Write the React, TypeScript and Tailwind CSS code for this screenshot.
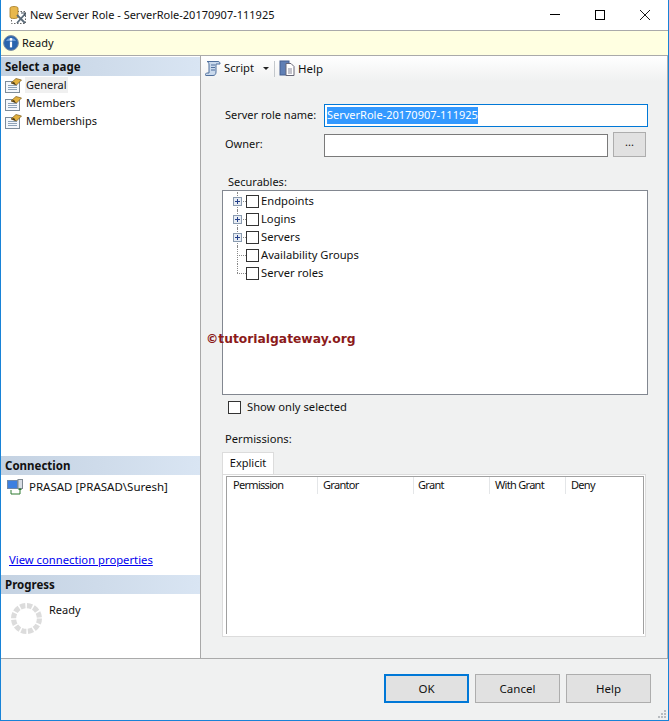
const font = { fontFamily: '"Noto Sans", sans-serif' };

// Server role page icon
function PageIcon() {
  return (
    <svg width="17" height="16" viewBox="0 0 17 16" className="shrink-0">
      <rect x="0.5" y="4.5" width="14" height="11" fill="#f4f7fb" stroke="#7d8b99" />
      <path d="M3 8.5h9M3 10.5h9M3 12.5h9" stroke="#8fa3b8" />
      <path d="M6 6l5-4.5 5.5 1.5-5 5z" fill="#e3b13f" stroke="#7a5a1a" strokeWidth="0.7" />
      <path d="M6 6l3-1 2 3z" fill="#4a3a18" />
    </svg>
  );
}

function SectionHeader({ children }: { children: React.ReactNode }) {
  return (
    <div className="flex h-[19px] shrink-0 items-center bg-gradient-to-r from-[#c4d2e2] to-[#d9e5f3] pl-1 text-[11.5px] font-bold text-[#111]">
      {children}
    </div>
  );
}

function Checkbox() {
  return <span className="block h-[13px] w-[13px] shrink-0 border border-[#333] bg-white" />;
}

function TreeRow({ label, expand, last }: { label: string; expand?: boolean; last?: boolean }) {
  return (
    <div className="relative flex h-[18px] items-center pl-[23px]">
      <span className={`absolute left-[14px] top-0 w-0 border-l border-dotted border-[#888] ${last ? "h-[9px]" : "h-[18px]"}`} />
      <span className="absolute left-[14px] top-[9px] w-[9px] border-t border-dotted border-[#888]" />
      {expand && (
        <svg width="9" height="9" viewBox="0 0 9 9" className="absolute left-[10px] top-[5px]">
          <rect x="0.5" y="0.5" width="8" height="8" fill="#e8edf4" stroke="#8a9bb0" />
          <path d="M2 4.5h5M4.5 2v5" stroke="#24408a" />
        </svg>
      )}
      <Checkbox />
      <span className="ml-[2px] text-[11.2px] text-[#111]">{label}</span>
    </div>
  );
}

function Column({ label, width }: { label: string; width: string }) {
  return (
    <div className={`flex h-[17px] items-center border-r border-[#e4e6e8] tracking-[-0.7px] text-[#111] ${width}`}>
      {label}
    </div>
  );
}

function FooterButton({ label, active }: { label: string; active?: boolean }) {
  return (
    <button
      type="button"
      className={`h-[29px] w-[85px] bg-[#e1e1e1] text-[11.5px] text-[#111] ${active ? "border-2 border-[#0078d7]" : "border border-[#adadad]"}`}
    >
      {label}
    </button>
  );
}

export default function App() {
  return (
    <div style={font} className="relative flex h-[721px] w-[669px] flex-col overflow-hidden border-x border-b border-[#1883d7] bg-white text-[11px] text-[#111]">
      {/* Title bar */}
      <div className="flex h-[31px] shrink-0 items-center border-b border-[#aaa] bg-white">
        <svg width="18" height="20" viewBox="0 0 18 20" className="ml-[8px] shrink-0">
          <rect x="2.5" y="6.5" width="14" height="12" fill="none" stroke="#666" strokeDasharray="1.5 1.5" />
          <path d="M1 3c0-2 8-2 8 0v9c0 2-8 2-8 0z" fill="#e8b84e" stroke="#a57a25" strokeWidth="0.8" />
          <path d="M8 10l8 8M16 9l-8 9" stroke="#5a6a78" strokeWidth="1.8" />
          <path d="M12 8h4v3" fill="none" stroke="#3c4a58" strokeWidth="1.2" />
        </svg>
        <span className="ml-[3px] text-[#111]">New Server Role - ServerRole-20170907-111925</span>
        <div className="ml-auto mr-[18px] flex items-center gap-[35px]">
          <svg width="10" height="10" viewBox="0 0 10 10">
            <path d="M0 4.5h10" stroke="#000" />
          </svg>
          <svg width="10" height="10" viewBox="0 0 10 10">
            <rect x="0.5" y="0.5" width="9" height="9" fill="none" stroke="#000" />
          </svg>
          <svg width="10" height="10" viewBox="0 0 10 10">
            <path d="M0 0l10 10M10 0L0 10" stroke="#000" strokeWidth="0.9" />
          </svg>
        </div>
      </div>

      {/* Status bar */}
      <div className="flex h-[25px] shrink-0 items-center border-b border-[#aaa] bg-[#ffffe1] pl-[2px]">
        <svg width="16" height="16" viewBox="0 0 16 16" className="shrink-0">
          <circle cx="8" cy="8" r="7.4" fill="#2a64ad" stroke="#7f8fa3" />
          <path d="M3 6a5.5 5 0 0 1 10 0z" fill="#6d9bd6" />
          <circle cx="8" cy="4.4" r="1.3" fill="#fff" />
          <rect x="6.9" y="6.6" width="2.2" height="5.8" fill="#fff" />
        </svg>
        <span className="ml-[3px]">Ready</span>
      </div>

      <div className="flex min-h-0 flex-1">
        {/* Left panel */}
        <div className="flex w-[200px] shrink-0 flex-col border-r border-[#a8a8a8] bg-white pt-[1px]">
          <SectionHeader>Select a page</SectionHeader>
          <div className="flex flex-col pl-1">
            {["General", "Members", "Memberships"].map((page) => (
              <div key={page} className="flex h-[18px] items-center gap-[3px]">
                <PageIcon />
                <span className={page === "General" ? "bg-[#f0f0f0] px-[1px]" : "px-[1px]"}>{page}</span>
              </div>
            ))}
          </div>
          <div className="flex-1" />
          <SectionHeader>Connection</SectionHeader>
          <div className="flex h-[100px] shrink-0 flex-col pl-[6px] pt-[3px]">
            <div className="flex h-[18px] items-center gap-[7px]">
              <svg width="16" height="16" viewBox="0 0 16 16" className="shrink-0">
                <rect x="0.5" y="1.5" width="10" height="8" fill="#3d7fe0" stroke="#7088a8" />
                <rect x="11" y="0.5" width="4.5" height="9" fill="#d8dde4" stroke="#7d8790" />
                <path d="M4 11v4h9v-4" fill="none" stroke="#2f7a30" />
                <path d="M11 11l2-2 2 2z" fill="#2f7a30" />
              </svg>
              <span className="-ml-[1px] text-[11.5px]">PRASAD [PRASAD\Suresh]</span>
            </div>
            <a href="#" className="mt-auto mb-[6px] ml-[2px] text-[11.25px] text-[#0000ee] underline">
              View connection properties
            </a>
          </div>
          <SectionHeader>Progress</SectionHeader>
          <div className="flex h-[64px] shrink-0 items-start pl-[10px] pt-[8px]">
            <svg width="31" height="31" viewBox="1 1 30 30" className="mt-[1px] shrink-0">
              <circle cx="16" cy="16" r="12.5" fill="none" stroke="#dcdcdc" strokeWidth="5" strokeDasharray="5 1.55" />
            </svg>
            <span className="ml-[7px] leading-[16px]">Ready</span>
          </div>
        </div>

        {/* Right panel */}
        <div className="flex min-w-0 flex-1 flex-col border-r border-[#b0b0b0] bg-[#f0f1f1]">
          <div className="flex h-[25px] shrink-0 items-center bg-gradient-to-b from-white to-[#f0f1f1] pl-[4px]">
            <svg width="17" height="17" viewBox="0 0 17 17" className="shrink-0">
              <path d="M2 1.5h11c1.5 0 2 1 2 2.5h-4v8c0 2-1 3.5-3 3.5H1c-1 0-.5-2 .5-2.5H4V5C4 3 3.5 2 2 1.5z" fill="#c9d9ec" stroke="#4f6f9c" />
              <path d="M6 5h4M6 7.5h4M6 10h4" stroke="#4f6f9c" />
            </svg>
            <span className="ml-[2px] text-[11.2px]">Script</span>
            <span className="ml-[9px] h-0 w-0 border-x-[3px] border-t-[3px] border-x-transparent border-t-[#222]" />
            <span className="ml-[5px] h-[16px] border-l border-[#c4c8cc]" />
            <svg width="17" height="17" viewBox="0 0 17 17" className="ml-[4px] shrink-0">
              <rect x="1" y="1" width="9" height="14" fill="#5f7fb5" stroke="#445f90" />
              <path d="M7 3.5h5l3 3v9H7z" fill="#fff" stroke="#667" />
              <path d="M9 9h4M9 11h4M9 13h4" stroke="#889" />
            </svg>
            <span className="ml-[2px] text-[11.5px]">Help</span>
          </div>

          <div className="flex flex-1 flex-col pl-[21px] pr-[19px]">
            {/* Name fields */}
            <div className="mt-[23px] flex items-center">
              <span className="ml-[3px] w-[99px] whitespace-nowrap">Server role name:</span>
              <div className="flex h-[23px] flex-1 items-center border border-[#0078d7] bg-white pl-[2px]">
                <span className="bg-[#3399ff] text-white">ServerRole-20170907-111925</span>
              </div>
            </div>
            <div className="mt-[5px] flex items-end">
              <span className="ml-[3px] w-[99px] self-center">Owner:</span>
              <div className="h-[23px] w-[284px] border border-[#7a7a7a] bg-white" />
              <button type="button" className="ml-[5px] h-[25px] w-[33px] border border-[#adadad] bg-[#e1e1e1] pb-[4px] text-[11px]">
                ...
              </button>
            </div>

            {/* Securables */}
            <div className="mt-[16px] ml-[6px] h-[17px] pt-[1px]">Securables:</div>
            <div className="h-[205px] border border-[#828790] bg-white pt-[1px]">
              <TreeRow label="Endpoints" expand />
              <TreeRow label="Logins" expand />
              <TreeRow label="Servers" expand />
              <TreeRow label="Availability Groups" />
              <TreeRow label="Server roles" last />
            </div>
            <div className="mt-[4px] ml-[6px] flex items-center">
              <Checkbox />
              <span className="ml-[6px] text-[11.2px]">Show only selected</span>
            </div>

            {/* Permissions */}
            <div className="mt-[15px] ml-[3px] h-[17px] text-[11.2px]">Permissions:</div>
            <div className="mt-[4px] flex h-[22px] w-[52px] items-center justify-center border-x border-t border-[#dcdcdc] bg-white">
              Explicit
            </div>
            <div className="mr-[2px] h-[163px] border border-[#dcdcdc] bg-white pb-[2px] pt-[1px] pl-[3px] pr-[1px]">
              <div className="h-full border-x border-t border-[#a0a0a0] bg-white">
                <div className="flex">
                  <Column label="Permission" width="w-[91px] pl-[6px]" />
                  <Column label="Grantor" width="w-[96px] pl-[5px]" />
                  <Column label="Grant" width="w-[76px] pl-[4px]" />
                  <Column label="With Grant" width="w-[76px] pl-[5px]" />
                  <div className="flex h-[17px] items-center pl-[5px] tracking-[-0.7px]">Deny</div>
                </div>
              </div>
            </div>
          </div>
        </div>
      </div>

      {/* Footer */}
      <div className="relative flex h-[62px] shrink-0 items-start justify-end gap-[6px] border-t border-[#aaa] bg-[#f0f1f1] pr-[17px] pt-[15px]">
        <FooterButton label="OK" active />
        <FooterButton label="Cancel" />
        <FooterButton label="Help" />
        <svg width="10" height="10" viewBox="0 0 10 10" className="absolute bottom-[1px] right-[1px]">
          <path d="M7 1h2v2H7zM4 4h2v2H4zM7 4h2v2H7zM1 7h2v2H1zM4 7h2v2H4zM7 7h2v2H7z" fill="#b8bcc0" />
        </svg>
      </div>

      {/* Watermark */}
      <div
        className="absolute left-[205px] top-[330px] text-[12.3px] font-bold text-[#8b1a1a]"
        style={{ fontFamily: '"DejaVu Sans", sans-serif' }}
      >
        ©tutorialgateway.org
      </div>
    </div>
  );
}
